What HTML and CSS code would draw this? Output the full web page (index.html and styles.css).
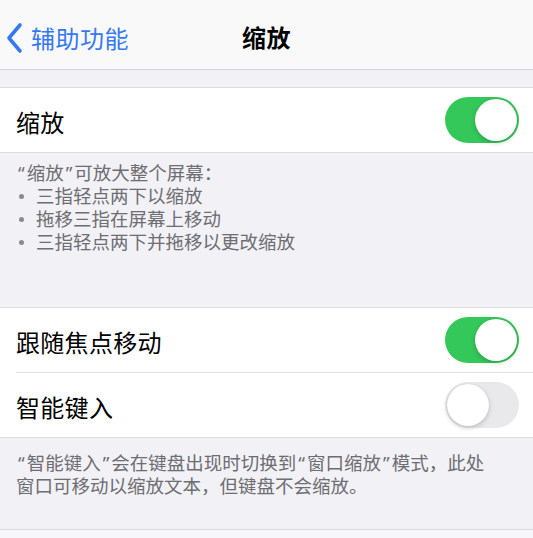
FILE: index.html
```html
<!DOCTYPE html>
<html lang="zh-CN">
<head>
<meta charset="utf-8">
<link rel="stylesheet" href="styles.css">
</head>
<body>
<div class="page">
  <header class="nav">
    <div class="back">
      <svg class="chev" width="20" height="32" viewBox="0 0 20 32"><path d="M15 3 L4 16 L15 29" fill="none" stroke="#3478f6" stroke-width="3.6" stroke-linecap="round" stroke-linejoin="round"/></svg>
      <span class="back-text">辅助功能</span>
    </div>
    <div class="title">缩放</div>
  </header>
  <div class="spacer"></div>
  <section class="group">
    <div class="row">
      <span class="label">缩放</span>
      <span class="toggle on"><span class="knob"></span></span>
    </div>
  </section>
  <div class="footer f1">
    <div><span class="q">“</span>缩放<span class="q">”</span>可放大整个屏幕：</div>
    <ul class="bullets">
      <li><span class="dot"></span><span>三指轻点两下以缩放</span></li>
      <li><span class="dot"></span><span>拖移三指在屏幕上移动</span></li>
      <li><span class="dot"></span><span>三指轻点两下并拖移以更改缩放</span></li>
    </ul>
  </div>
  <section class="group">
    <div class="row sep">
      <span class="label">跟随焦点移动</span>
      <span class="toggle on"><span class="knob"></span></span>
    </div>
    <div class="row">
      <span class="label">智能键入</span>
      <span class="toggle off"><span class="knob"></span></span>
    </div>
  </section>
  <div class="footer f2"><span class="q">“</span>智能键入<span class="q">”</span>会在键盘出现时切换到<span class="q">“</span>窗口缩放<span class="q">”</span>模式，此处窗口可移动以缩放文本，但键盘不会缩放。</div>
  <div class="tail"></div>
</div>
</body>
</html>
```
FILE: styles.css
```css
* { box-sizing: border-box; }
html, body { margin: 0; padding: 0; }
body {
  background: #f2f1f6;
  font-family: "Noto Sans CJK SC", "Noto Sans", sans-serif;
  color: #000;
  width: 533px;
  height: 538px;
  overflow: hidden;
}
.page { display: flex; flex-direction: column; }
.nav {
  height: 70px;
  background: #f9f9f9;
  border-bottom: 1px solid #d6d6d9;
  display: flex;
  align-items: center;
  justify-content: center;
  position: relative;
  padding-top: 5px;
}
.back {
  position: absolute;
  left: 5px;
  top: 22px;
  display: flex;
  align-items: center;
  gap: 6px;
}
.chev { display: block; }
.back-text {
  color: #3478f6;
  font-size: 24px;
  line-height: 32px;
  letter-spacing: 0.5px;
}
.title {
  font-size: 24px;
  font-weight: 600;
  line-height: 32px;
  letter-spacing: 0.5px;
}
.spacer { height: 17px; }
.group {
  background: #fff;
  border-top: 1px solid #dcdce0;
  border-bottom: 1px solid #dcdce0;
}
.row {
  height: 64px;
  display: flex;
  align-items: center;
  justify-content: space-between;
  padding: 0 14px 0 16px;
  position: relative;
}
.row.sep {
  height: 65px;
  border-bottom: 1px solid #e2e2e6;
  margin-left: 16px;
  padding-left: 0;
}
.label {
  font-size: 24px;
  line-height: 32px;
  padding-top: 4px;
  letter-spacing: 0.3px;
}
.toggle {
  width: 74px;
  height: 46px;
  border-radius: 23px;
  position: relative;
  display: block;
}
.toggle.on { background: #34c759; }
.toggle.off { background: #e9e9eb; }
.knob {
  position: absolute;
  top: 2px;
  width: 42px;
  height: 42px;
  border-radius: 50%;
  background: #fff;
  box-shadow: 0 2px 5px rgba(0,0,0,0.18), 0 0 1px rgba(0,0,0,0.15);
}
.toggle.on .knob { right: 2px; }
.toggle.off .knob { left: 2px; }
.footer {
  color: #6d6d72;
  font-size: 18.5px;
  line-height: 23px;
  padding-left: 16px;
  padding-right: 40px;
}
.q {
  font-family: "Noto Sans", sans-serif;
  padding: 0 2px;
}
.f1 { height: 154px; padding-top: 8px; }
.f2 { height: 91px; padding-top: 13px; }
.bullets {
  list-style: none;
  margin: 0;
  padding: 0;
}
.bullets li {
  display: flex;
  align-items: center;
  height: 23px;
}
.dot {
  width: 5px;
  height: 5px;
  border-radius: 50%;
  background: #8a8a8f;
  margin: 1px 12px 0 3px;
  flex: none;
}
.tail {
  border-top: 1px solid #dcdce0;
  height: 40px;
  background: #f7f7f9;
}
```
